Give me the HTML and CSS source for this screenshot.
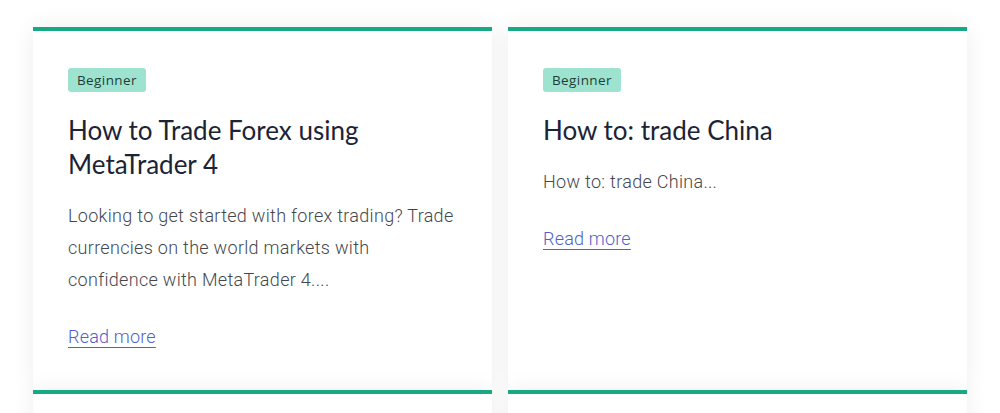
FILE: index.html
```html
<!DOCTYPE html>
<html lang="en">
<head>
<meta charset="utf-8">
<title>Guides</title>
<link rel="stylesheet" href="styles.css">
</head>
<body>
<main class="grid">
  <article class="card">
    <span class="badge">Beginner</span>
    <h2 class="title">How to Trade Forex using MetaTrader 4</h2>
    <p class="excerpt">Looking to get started with forex trading? Trade currencies on the world markets with confidence with MetaTrader 4....</p>
    <a class="more" href="#">Read more</a>
  </article>
  <article class="card">
    <span class="badge">Beginner</span>
    <h2 class="title">How to: trade China</h2>
    <p class="excerpt">How to: trade China...</p>
    <a class="more" href="#">Read more</a>
  </article>
  <article class="card card-next"></article>
  <article class="card card-next"></article>
</main>
</body>
</html>
```

FILE: styles.css
```css
html, body {
  margin: 0;
  padding: 0;
  background: #ffffff;
}

body {
  font-family: Roboto, "Liberation Sans", sans-serif;
}

.grid {
  display: grid;
  grid-template-columns: 459px 459px;
  column-gap: 16px;
  row-gap: 0;
  padding: 27px 33px 0 33px;
}

.card {
  display: flex;
  flex-direction: column;
  align-items: flex-start;
  background: #ffffff;
  border-top: 4px solid #17a884;
  padding: 37px 35px 39px 35px;
  box-shadow: 0 0 22px rgba(0, 0, 0, 0.07);
}

.card-next {
  min-height: 200px;
}

.badge {
  display: inline-block;
  height: 24px;
  line-height: 25px;
  padding: 0 9px;
  background: #9de3cf;
  color: #1f3d38;
  border-radius: 3px;
  font-family: "Open Sans", sans-serif;
  font-size: 13.5px;
  letter-spacing: 0.4px;
}

.title {
  margin: 21px 0 0 0;
  font-family: Lato, "Open Sans", sans-serif;
  font-weight: 400;
  font-size: 26px;
  line-height: 34px;
  color: #1b2436;
}

.excerpt {
  margin: 19px 0 0 0;
  font-family: Roboto, sans-serif;
  font-weight: 300;
  font-size: 18px;
  line-height: 32px;
  color: #44484e;
  letter-spacing: 0.3px;
}

.more {
  margin-top: 27px;
  font-family: Roboto, sans-serif;
  font-weight: 300;
  font-size: 18px;
  line-height: 28px;
  color: #5060c8;
  letter-spacing: 0.2px;
  text-decoration: underline;
  text-decoration-thickness: 1px;
  text-underline-offset: 4px;
}
```
